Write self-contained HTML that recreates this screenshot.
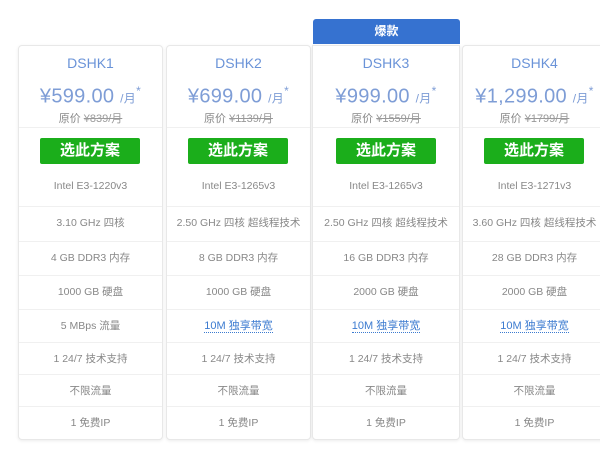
<!DOCTYPE html>
<html><head><meta charset="utf-8"><style>
body{margin:0;width:600px;height:452px;overflow:hidden;background:#fff;font-family:"Liberation Sans","Noto Sans CJK SC",sans-serif;position:relative}
.card{position:absolute;top:45px;width:143px;height:393px;border:1px solid #e8e8e8;border-radius:4px;box-shadow:0 1px 3px rgba(0,0,0,.08);background:#fff;text-align:center}
.t{position:absolute;left:0;right:0;top:9px;font-size:14px;color:#6a93d8}
.p{position:absolute;left:0;right:0;top:38px;font-size:20px;color:#7e9dd6;letter-spacing:.3px}
.p small{font-size:12px;color:#7e9dd6}
.p sup{font-size:12px}
.o{position:absolute;left:0;right:0;top:64px;font-size:11px;color:#888}
.o s{color:#999}
.hr{position:absolute;left:0;right:0;top:81px;border-top:1px solid #f0f0f0}
.b{position:absolute;left:21px;width:100px;top:92px;height:26px;background:#1bae1b;border-radius:2px;color:#fff;font-weight:bold;font-size:15px;line-height:26px}
.r{position:absolute;left:0;right:0;font-size:10.5px;color:#888;border-top:1px solid #f0f0f0;line-height:32px;height:32px}
.u{color:#3c7bd0;border-bottom:1px dotted #3c7bd0;font-size:11px}
.badge{position:absolute;left:313px;top:19px;width:147px;height:25px;background:#3672d0;border-radius:3px 3px 0 0;color:#fff;font-size:12px;font-weight:bold;text-align:center;line-height:25px}
</style></head><body>
<div class="badge">爆款</div>
<div class="card" style="left:18px"><div class="t">DSHK1</div><div class="p">¥599.00 <small>/月</small><sup>*</sup></div><div class="o">原价 <s>¥839/月</s></div><div class="hr"></div><div class="b">选此方案</div>
<div class="r" style="top:124px;border:0">Intel E3-1220v3</div><div class="r" style="top:160px">3.10 GHz 四核</div><div class="r" style="top:195px">4 GB DDR3 内存</div><div class="r" style="top:229px">1000 GB 硬盘</div><div class="r" style="top:263px">5 MBps 流量</div><div class="r" style="top:296px">1 24/7 技术支持</div><div class="r" style="top:328px">不限流量</div><div class="r" style="top:360px">1 免费IP</div></div>
<div class="card" style="left:166px"><div class="t">DSHK2</div><div class="p">¥699.00 <small>/月</small><sup>*</sup></div><div class="o">原价 <s>¥1139/月</s></div><div class="hr"></div><div class="b">选此方案</div>
<div class="r" style="top:124px;border:0">Intel E3-1265v3</div><div class="r" style="top:160px">2.50 GHz 四核 超线程技术</div><div class="r" style="top:195px">8 GB DDR3 内存</div><div class="r" style="top:229px">1000 GB 硬盘</div><div class="r" style="top:263px"><span class="u">10M 独享带宽</span></div><div class="r" style="top:296px">1 24/7 技术支持</div><div class="r" style="top:328px">不限流量</div><div class="r" style="top:360px">1 免费IP</div></div>
<div class="card" style="left:312px;width:146px;border-radius:0 0 4px 4px"><div class="t">DSHK3</div><div class="p">¥999.00 <small>/月</small><sup>*</sup></div><div class="o">原价 <s>¥1559/月</s></div><div class="hr"></div><div class="b" style="left:23px">选此方案</div>
<div class="r" style="top:124px;border:0">Intel E3-1265v3</div><div class="r" style="top:160px">2.50 GHz 四核 超线程技术</div><div class="r" style="top:195px">16 GB DDR3 内存</div><div class="r" style="top:229px">2000 GB 硬盘</div><div class="r" style="top:263px"><span class="u">10M 独享带宽</span></div><div class="r" style="top:296px">1 24/7 技术支持</div><div class="r" style="top:328px">不限流量</div><div class="r" style="top:360px">1 免费IP</div></div>
<div class="card" style="left:462px"><div class="t">DSHK4</div><div class="p">¥1,299.00 <small>/月</small><sup>*</sup></div><div class="o">原价 <s>¥1799/月</s></div><div class="hr"></div><div class="b">选此方案</div>
<div class="r" style="top:124px;border:0">Intel E3-1271v3</div><div class="r" style="top:160px">3.60 GHz 四核 超线程技术</div><div class="r" style="top:195px">28 GB DDR3 内存</div><div class="r" style="top:229px">2000 GB 硬盘</div><div class="r" style="top:263px"><span class="u">10M 独享带宽</span></div><div class="r" style="top:296px">1 24/7 技术支持</div><div class="r" style="top:328px">不限流量</div><div class="r" style="top:360px">1 免费IP</div></div>
</body></html>
